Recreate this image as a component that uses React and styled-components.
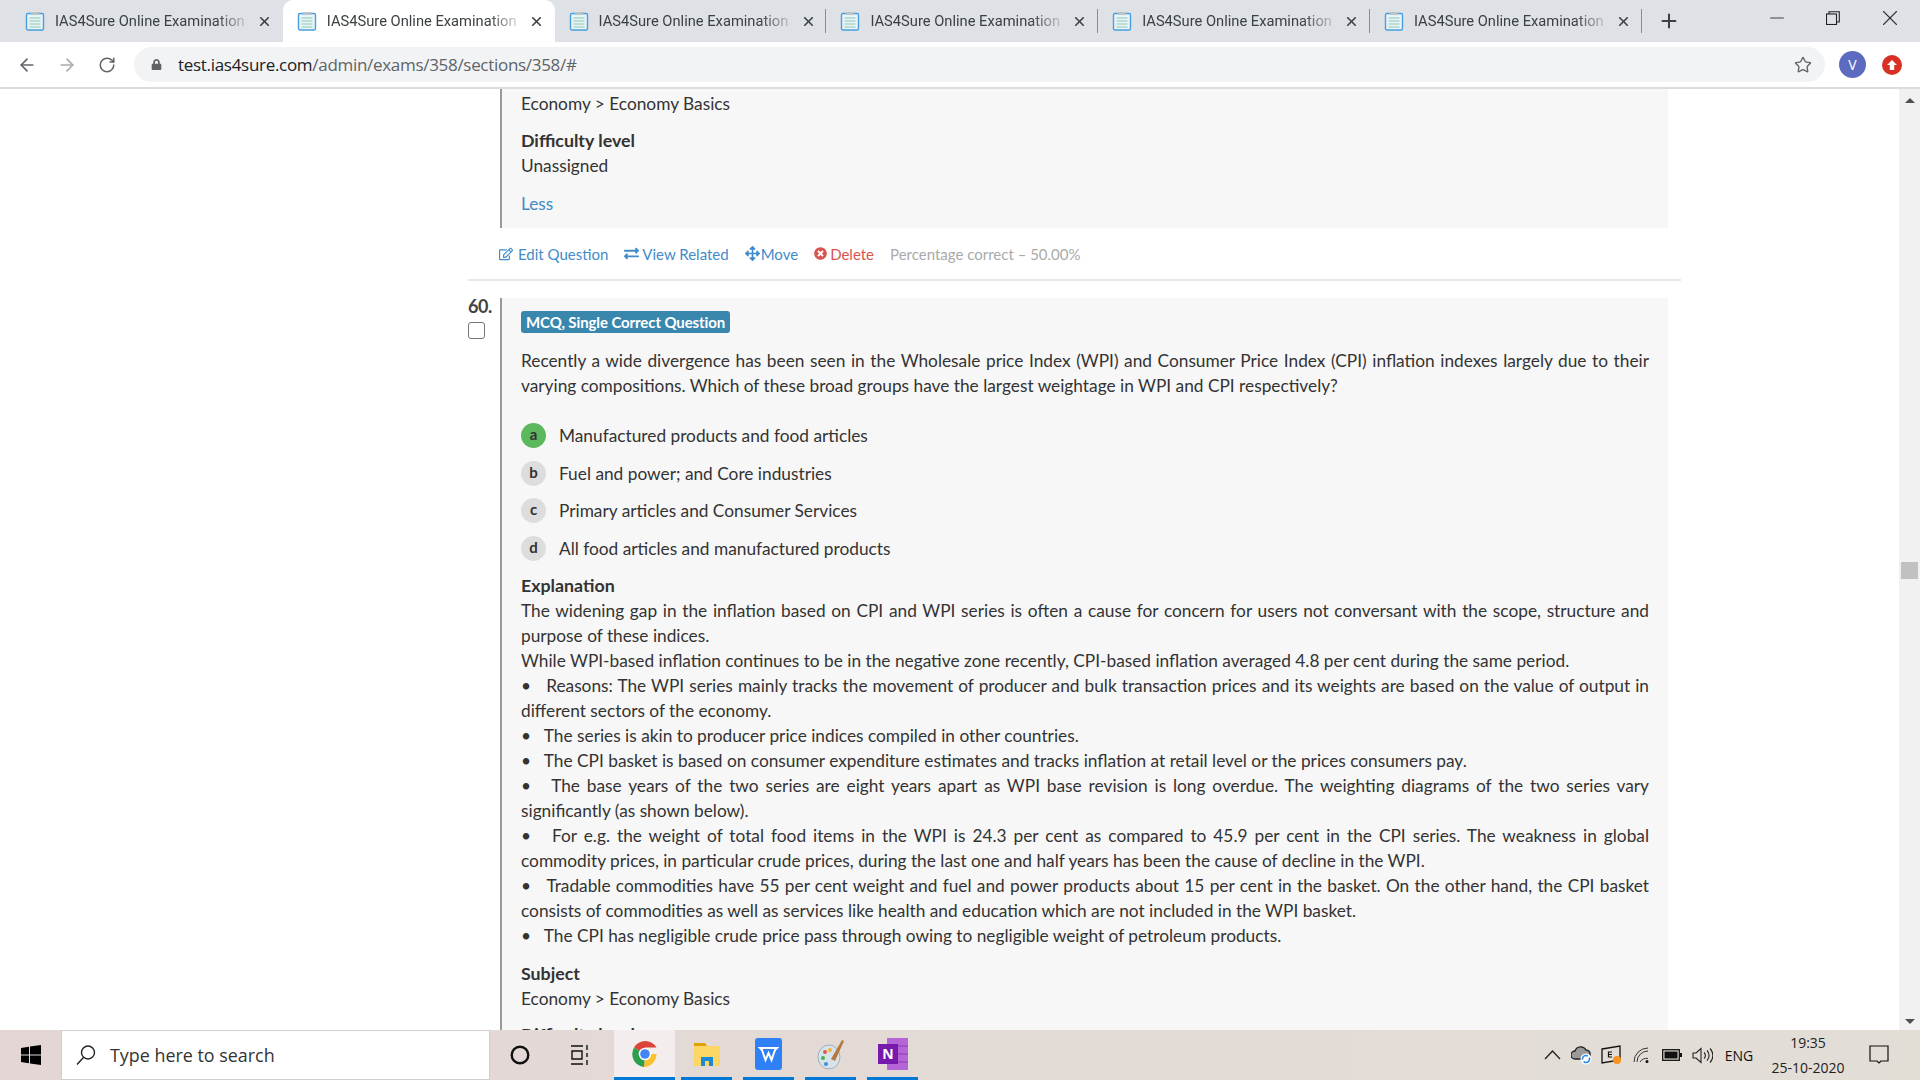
import React from "react";
import styled, { createGlobalStyle } from "styled-components";
import { ArrowLeft, ArrowRight, RotateCw, Star, Plus, X, Minus } from "lucide-react";
import { FaRegEdit, FaExchangeAlt, FaArrowsAlt, FaTimesCircle, FaLock } from "react-icons/fa";

const Global = createGlobalStyle`
	html, body { margin: 0; padding: 0; height: 100%; overflow: hidden; }
	body { font-family: "Lato", "Liberation Sans", sans-serif; color: #333; background: #fff; }
	* { box-sizing: border-box; }
`;

const Screen = styled.div`
	width: 1920px;
	height: 1080px;
	display: flex;
	flex-direction: column;
	overflow: hidden;
`;

/* browser chrome */
const TabBar = styled.div`
	height: 42px;
	flex: none;
	background: #dee1e6;
	display: flex;
	padding-left: 11px;
`;

const Tab = styled.div`
	width: 271.8px;
	height: 42px;
	flex: none;
	display: flex;
	align-items: center;
	padding: 0 10px 0 14px;
	position: relative;
	background: ${(p) => (p.$active ? "#fff" : "transparent")};
	border-radius: ${(p) => (p.$active ? "10px 10px 0 0" : "0")};

	& > svg {
		flex: none;
	}

	&::after {
		content: "";
		display: ${(p) => (p.$sep ? "block" : "none")};
		position: absolute;
		right: 0;
		top: 9px;
		height: 24px;
		width: 1px;
		background: #8b8d90;
	}
`;

const TabTitle = styled.span`
	margin-left: 10px;
	width: 192px;
	flex: none;
	font: 14.7px "Roboto", sans-serif;
	color: #3c4043;
	white-space: nowrap;
	-webkit-mask-image: linear-gradient(to right, #000 84%, rgba(0, 0, 0, 0.25) 98%);
	mask-image: linear-gradient(to right, #000 84%, rgba(0, 0, 0, 0.25) 98%);
`;

const TabClose = styled.span`
	margin-left: 10px;
	display: flex;
	color: #3c4043;
`;

const NewTab = styled.div`
	width: 46px;
	display: flex;
	align-items: center;
	justify-content: center;
	color: #3c4043;
	margin-left: 4px;
`;

const WindowButtons = styled.div`
	margin-left: auto;
	display: flex;
	height: 36px;
	align-items: center;
	color: #333;
	padding-right: 1px;
`;

const WindowButton = styled.div`
	width: ${(p) => p.$w || 56}px;
	display: flex;
	justify-content: center;
`;

const Toolbar = styled.div`
	height: 47px;
	flex: none;
	background: #fff;
	border-bottom: 2px solid #dadce0;
	display: flex;
	align-items: center;
	padding: 0 16px 0 7px;
`;

const NavButton = styled.div`
	width: 40px;
	display: flex;
	justify-content: center;
	color: ${(p) => (p.$dim ? "#a8abaf" : "#5f6368")};
`;

const Omnibox = styled.div`
	margin-left: 7px;
	width: 1691px;
	height: 35px;
	border-radius: 18px;
	background: #f1f3f4;
	display: flex;
	align-items: center;
	padding: 0 13px 0 17px;
	font: 17px "Open Sans", sans-serif;
	letter-spacing: -0.3px;
	color: #5f6368;
`;

const LockIcon = styled.span`
	display: flex;
	color: #5f6368;
	margin-right: 16px;
`;

const Host = styled.span`
	color: #202124;
`;

const StarIcon = styled.span`
	margin-left: auto;
	display: flex;
	color: #5f6368;
`;

const Avatar = styled.div`
	margin-left: 14px;
	width: 27px;
	height: 27px;
	border-radius: 50%;
	background: #5c6bc0;
	color: #fff;
	font: 14px "Open Sans", sans-serif;
	display: flex;
	align-items: center;
	justify-content: center;
`;

const UpdateBadge = styled.div`
	margin-left: 16px;
	width: 20px;
	height: 20px;
	border-radius: 50%;
	background: #d93025;
	display: flex;
	align-items: center;
	justify-content: center;
`;

/* page */
const Viewport = styled.div`
	flex: 1;
	min-height: 0;
	display: flex;
	overflow: hidden;
`;

const Main = styled.main`
	flex: 1;
	min-width: 0;
	padding-left: 468px;
	overflow: hidden;
`;

const Column = styled.div`
	width: 1213px;
`;

const Question = styled.div`
	display: flex;
	align-items: stretch;
`;

const Gutter = styled.div`
	width: 32px;
	flex: none;
`;

const Number = styled.div`
	font-size: 18px;
	font-weight: 700;
	line-height: 18px;
	letter-spacing: -0.5px;
	margin-top: -1px;
	color: #444;
`;

const Check = styled.input.attrs({ type: "checkbox" })`
	appearance: none;
	display: block;
	width: 17px;
	height: 17px;
	margin: 7px 0 0;
	border: 1px solid #767676;
	border-radius: 3px;
	background: #fff;
`;

const Card = styled.div`
	width: 1168px;
	flex: none;
	background: #f7f7f7;
	border-left: 2px solid #999;
	padding: ${(p) => (p.$top ? "2px" : "3px")} 19px 0;
	font-size: 17.3px;
	line-height: 25px;
	min-height: ${(p) => (p.$top ? "auto" : "800px")};
`;

const Line = styled.div`
	margin-top: ${(p) => p.$gap || 0}px;
`;

const Label = styled.div`
	font-weight: 700;
	font-size: 17.8px;
	margin-top: ${(p) => p.$gap || 0}px;
`;

const MoreLink = styled.a`
	display: block;
	color: #428bca;
	margin-top: 13px;
	height: 37px;
`;

const Actions = styled.div`
	display: flex;
	align-items: center;
	height: 53px;
	padding-left: 31px;
	font-size: 15px;
	border-bottom: 2px solid #e8e8e8;
`;

const Action = styled.a`
	display: flex;
	align-items: center;
	gap: ${(p) => p.$gap || 3}px;
	margin-right: ${(p) => p.$mr || 16}px;
	color: ${(p) => (p.$danger ? "#d9534f" : "#428bca")};

	& svg {
		flex: none;
	}
`;

const Score = styled.span`
	color: #aaa;
`;

const Spacer = styled.div`
	height: 17px;
`;

const Badge = styled.span`
	display: inline-block;
	height: 22px;
	padding: 0 5px;
	background: #3a87ad;
	border-radius: 3px;
	color: #fff;
	font-size: 15px;
	font-weight: 700;
	line-height: 22px;
	margin-top: 10px;
	vertical-align: top;
	letter-spacing: -0.1px;
`;

const BadgeRow = styled.div`
	height: 32px;
`;

const Prose = styled.div`
	text-align: justify;
	margin-top: ${(p) => p.$gap || 0}px;
`;

const Options = styled.div`
	margin-top: 25px;
	display: flex;
	flex-direction: column;
	gap: 12.6px;
`;

const Option = styled.div`
	display: flex;
	align-items: center;
	height: 25px;
	gap: 13px;
`;

const Letter = styled.span`
	width: 25px;
	height: 25px;
	border-radius: 50%;
	background: ${(p) => (p.$correct ? "#5cb85c" : "#ddd")};
	font-size: 15px;
	font-weight: 700;
	display: flex;
	align-items: center;
	justify-content: center;
	padding-bottom: 2px;
`;

const Scrollbar = styled.div`
	width: 21px;
	flex: none;
	background: #f1f1f1;
	display: flex;
	flex-direction: column;
	align-items: center;
	padding: 9px 0 6px;
`;

const Arrow = styled.span`
	width: 0;
	height: 0;
	border-left: 5px solid transparent;
	border-right: 5px solid transparent;
	${(p) => (p.$down ? "border-top: 5px solid #505050;" : "border-bottom: 5px solid #505050;")}
`;

const Thumb = styled.div`
	width: 17px;
	height: 17px;
	background: #c1c1c1;
	margin-top: 459px;
	margin-bottom: auto;
`;

/* taskbar */
const Taskbar = styled.div`
	height: 50px;
	flex: none;
	background: linear-gradient(to right, #e3d6d5, #e3dbd6 55%, #e2ded6);
	display: flex;
	align-items: stretch;
	color: #111;
`;

const StartButton = styled.div`
	width: 61px;
	display: flex;
	align-items: center;
	justify-content: center;
`;

const SearchBox = styled.div`
	width: 429px;
	background: #fff;
	border: 1px solid #cfcfcf;
	display: flex;
	align-items: center;
	padding-left: 13px;
	gap: 13px;
	font: 17.9px "Open Sans", sans-serif;
	color: #333;
`;

const Plain = styled.div`
	width: ${(p) => p.$w}px;
	display: flex;
	align-items: center;
	justify-content: center;
`;

const Pinned = styled.div`
	width: ${(p) => p.$w}px;
	margin-left: ${(p) => p.$ml || 0}px;
	display: flex;
	align-items: center;
	justify-content: center;
	background: ${(p) => (p.$active ? "#f3eeed" : "transparent")};
	border-bottom: 3px solid #0078d7;
`;

const Tray = styled.div`
	margin-left: auto;
	display: flex;
	align-items: center;
	padding-right: 17px;
`;

const TrayIcon = styled.div`
	width: ${(p) => p.$w || 30}px;
	display: flex;
	justify-content: center;
`;

const Lang = styled.div`
	width: 44px;
	text-align: center;
	font: 14px "Open Sans", sans-serif;
`;

const Clock = styled.div`
	width: 94px;
	text-align: center;
	font: 14px/25px "Open Sans", sans-serif;
	color: #222;
`;

const TabIcon = () => (
	<svg width="20" height="20" viewBox="0 0 20 20">
		<rect x="1.5" y="2.5" width="17" height="16.5" rx="1.5" fill="#e9f3f8" stroke="#4a9fdc" strokeWidth="1.4" />
		<rect x="6" y="1" width="8" height="3" fill="#b7c4cc" />
		<path d="M4.5 7h11M4.5 10h11M4.5 13h11M4.5 16h11" stroke="#a9d8c8" strokeWidth="1.3" />
	</svg>
);

const WindowsLogo = () => (
	<svg width="20" height="20" viewBox="0 0 20 20" fill="#000">
		<path d="M0 3l8-1.2v7.7H0zM9 1.6L20 0v9.5H9zM0 10.500h8v7.700L0 17zM9 10.500h11V20L9 18.400z" />
	</svg>
);

const SearchGlass = () => (
	<svg width="22" height="22" viewBox="0 0 22 22" fill="none" stroke="#222" strokeWidth="1.4">
		<circle cx="13" cy="8.500" r="6.500" />
		<path d="M8.500 13.500L2 20.500" />
	</svg>
);

const TaskView = () => (
	<svg width="20" height="20" viewBox="0 0 20 20" fill="none" stroke="#111" strokeWidth="1.4">
		<path d="M0 1h12M0 19h12M1 6h10v8H1zM16 0v5M16 8v4M16 15v5" />
	</svg>
);

const ChromeIcon = () => (
	<svg width="28" height="28" viewBox="0 0 28 28">
		<path d="M14 14L3 7.500A13 13 0 0 1 25.500 7.500H14z" fill="#db4437" />
		<path d="M14 14H25.500A13 13 0 0 1 13 27z" fill="#fbc02d" />
		<path d="M14 14L13 27A13 13 0 0 1 3 7.500z" fill="#2e9e4f" />
		<circle cx="14" cy="14" r="6.300" fill="#fff" />
		<circle cx="14" cy="14" r="4.800" fill="#4285f4" />
	</svg>
);

const FolderIcon = () => (
	<svg width="28" height="28" viewBox="0 0 28 28">
		<path d="M1 3h11l2 3H1z" fill="#e0a100" />
		<rect x="1" y="6" width="26" height="20" fill="#fcd766" />
		<path d="M8 26v-9h12v9h-4v-5h-4v5z" fill="#1e88d8" />
	</svg>
);

const WpsIcon = () => (
	<svg width="27" height="32" viewBox="0 0 27 32">
		<rect width="27" height="32" rx="3" fill="#2f80f5" />
		<path d="M5 10h17l-2 2-3.500 10-3-7-3 7L7 12z" fill="none" stroke="#fff" strokeWidth="2" />
	</svg>
);

const PaintIcon = () => (
	<svg width="30" height="32" viewBox="0 0 30 32">
		<ellipse cx="13" cy="19" rx="11" ry="12" fill="#d7e3ea" stroke="#9fb0ba" />
		<circle cx="9" cy="14" r="2" fill="#e2574c" />
		<circle cx="14" cy="12" r="2" fill="#f2b632" />
		<circle cx="7" cy="20" r="2" fill="#4caf50" />
		<circle cx="10" cy="26" r="2" fill="#3f8fdc" />
		<path d="M15 21L26 2l2 1-9 20z" fill="#b5793c" />
	</svg>
);

const OneNoteIcon = () => (
	<svg width="30" height="32" viewBox="0 0 30 32">
		<rect x="9" y="0" width="21" height="32" fill="#b565d8" />
		<path d="M9 8h21M9 16h21M9 24h21" stroke="#8a3fb0" strokeWidth="1" />
		<rect x="0" y="6" width="20" height="20" fill="#7719aa" />
		<text x="10" y="21" textAnchor="middle" fill="#fff" fontSize="14" fontWeight="700" fontFamily="Open Sans">N</text>
	</svg>
);

const CloudIcon = () => (
	<svg width="22" height="20" viewBox="0 0 22 20">
		<path d="M4 14a4 4 0 0 1 0-8 6 6 0 0 1 11-1 4 4 0 0 1 4 5v4z" fill="#9a9a9a" stroke="#222" strokeWidth="1.300" />
		<circle cx="15" cy="14" r="5.500" fill="#fff" />
		<circle cx="15" cy="14" r="3.500" fill="none" stroke="#1e88e5" strokeWidth="1.600" strokeDasharray="8 2" />
	</svg>
);

const StoreIcon = () => (
	<svg width="22" height="20" viewBox="0 0 22 20">
		<path d="M1 4l18-3v14L1 18z" fill="none" stroke="#111" strokeWidth="1.300" />
		<path d="M11 7H7.500v5H11M7.500 9.500H11" fill="none" stroke="#111" strokeWidth="1.200" />
		<circle cx="16" cy="15" r="4" fill="#f7931e" />
	</svg>
);

const WifiIcon = () => (
	<svg width="18" height="18" viewBox="0 0 18 18" fill="none" stroke="#333" strokeWidth="1">
		<path d="M1 16A14 14 0 0 1 15 2M4 16A11 11 0 0 1 15 5M7 16a8 8 0 0 1 8-3.500" />
		<circle cx="14" cy="15.500" r="1.500" fill="#111" stroke="none" />
	</svg>
);

const BatteryIcon = () => (
	<svg width="20" height="12" viewBox="0 0 20 12">
		<rect x="0.700" y="0.700" width="16.600" height="10.600" fill="none" stroke="#111" strokeWidth="1.300" />
		<rect x="2.500" y="2.500" width="13" height="7" fill="#111" />
		<rect x="18" y="4" width="2" height="4" fill="#111" />
	</svg>
);

const SpeakerIcon = () => (
	<svg width="21" height="17" viewBox="0 0 21 17" fill="none" stroke="#222" strokeWidth="1.100">
		<path d="M1 6h3l5-4.500v14L4 11H1z" />
		<path d="M12 5.500a4 4 0 0 1 0 6M15 3.500a7 7 0 0 1 0 10M18 1.500a10 10 0 0 1 0 14" />
	</svg>
);

const TrayChevron = () => (
	<svg width="17" height="10" viewBox="0 0 17 10" fill="none" stroke="#222" strokeWidth="1.300">
		<path d="M1 9l7.500-8L16 9" />
	</svg>
);

const NotifyIcon = () => (
	<svg width="20" height="20" viewBox="0 0 20 20" fill="none" stroke="#111" strokeWidth="1.200">
		<path d="M1 1h18v15h-7l-2 2-2-2H1z" />
	</svg>
);

const bullet = "•\u00a0\u00a0\u00a0";

const explanation = [
	"The widening gap in the inflation based on CPI and WPI series is often a cause for concern for users not conversant with the scope, structure and purpose of these indices.",
	"While WPI-based inflation continues to be in the negative zone recently, CPI-based inflation averaged 4.8 per cent during the same period.",
	bullet + "Reasons: The WPI series mainly tracks the movement of producer and bulk transaction prices and its weights are based on the value of output in different sectors of the economy.",
	bullet + "The series is akin to producer price indices compiled in other countries.",
	bullet + "The CPI basket is based on consumer expenditure estimates and tracks inflation at retail level or the prices consumers pay.",
	bullet + "The base years of the two series are eight years apart as WPI base revision is long overdue. The weighting diagrams of the two series vary significantly (as shown below).",
	bullet + "For e.g. the weight of total food items in the WPI is 24.3 per cent as compared to 45.9 per cent in the CPI series. The weakness in global commodity prices, in particular crude prices, during the last one and half years has been the cause of decline in the WPI.",
	bullet + "Tradable commodities have 55 per cent weight and fuel and power products about 15 per cent in the basket. On the other hand, the CPI basket consists of commodities as well as services like health and education which are not included in the WPI basket.",
	bullet + "The CPI has negligible crude price pass through owing to negligible weight of petroleum products.",
];

const options = [
	{ key: "a", text: "Manufactured products and food articles", correct: true },
	{ key: "b", text: "Fuel and power; and Core industries" },
	{ key: "c", text: "Primary articles and Consumer Services" },
	{ key: "d", text: "All food articles and manufactured products" },
];

const App = () => {
	return (
		<Screen>
			<Global />
			<TabBar>
				{[0, 1, 2, 3, 4, 5].map((i) => (
					<Tab key={i} $active={i === 1} $sep={i > 1}>
						<TabIcon />
						<TabTitle>IAS4Sure Online Examination</TabTitle>
						<TabClose><X size={15} strokeWidth={2.6} /></TabClose>
					</Tab>
				))}
				<NewTab><Plus size={22} strokeWidth={2.2} /></NewTab>
				<WindowButtons>
					<WindowButton><Minus size={22} strokeWidth={1} /></WindowButton>
					<WindowButton>
						<svg width="14" height="14" viewBox="0 0 14 14" fill="none" stroke="#222" strokeWidth="1.100">
							<rect x="0.500" y="3" width="10" height="10.500" />
							<path d="M3 3V0.700h10.300V11H10.500" />
						</svg>
					</WindowButton>
					<WindowButton $w={58}><X size={26} strokeWidth={1} /></WindowButton>
				</WindowButtons>
			</TabBar>
			<Toolbar>
				<NavButton><ArrowLeft size={20} strokeWidth={2} /></NavButton>
				<NavButton $dim><ArrowRight size={20} strokeWidth={2} /></NavButton>
				<NavButton><RotateCw size={18} strokeWidth={2} /></NavButton>
				<Omnibox>
					<LockIcon><FaLock size={11} /></LockIcon>
					<Host>test.ias4sure.com</Host>/admin/exams/358/sections/358/#
					<StarIcon><Star size={18} strokeWidth={1.8} /></StarIcon>
				</Omnibox>
				<Avatar>V</Avatar>
				<UpdateBadge>
					<svg width="12" height="12" viewBox="0 0 12 12" fill="#fff"><path d="M6 1l5 5H8.200v5H3.800V6H1z" /></svg>
				</UpdateBadge>
			</Toolbar>
			<Viewport>
				<Main>
					<Column>
						<Question>
							<Gutter />
							<Card $top>
								<Line>Economy &gt; Economy Basics</Line>
								<Label $gap={12}>Difficulty level</Label>
								<Line>Unassigned</Line>
								<MoreLink>Less</MoreLink>
							</Card>
						</Question>
						<Actions>
							<Action $gap={5}><FaRegEdit size={14} />Edit Question</Action>
							<Action><FaExchangeAlt size={15} />View Related</Action>
							<Action $gap={1}><FaArrowsAlt size={15} />Move</Action>
							<Action $danger><FaTimesCircle size={13} />Delete</Action>
							<Score>Percentage correct – 50.00%</Score>
						</Actions>
						<Spacer />
						<Question>
							<Gutter>
								<Number>60.</Number>
								<Check readOnly />
							</Gutter>
							<Card>
								<BadgeRow><Badge>MCQ, Single Correct Question</Badge></BadgeRow>
								<Prose $gap={15}>
									Recently a wide divergence has been seen in the Wholesale price Index (WPI) and Consumer Price Index (CPI) inflation indexes largely due to their varying compositions. Which of these broad groups have the largest weightage in WPI and CPI respectively?
								</Prose>
								<Options>
									{options.map((o) => (
										<Option key={o.key}>
											<Letter $correct={o.correct}>{o.key}</Letter>
											{o.text}
										</Option>
									))}
								</Options>
								<Label $gap={12}>Explanation</Label>
								{explanation.map((t, i) => (
									<Prose key={i}>{t}</Prose>
								))}
								<Label $gap={13}>Subject</Label>
								<Line>Economy &gt; Economy Basics</Line>
								<Label $gap={11}>Difficulty level</Label>
							</Card>
						</Question>
					</Column>
				</Main>
				<Scrollbar>
					<Arrow />
					<Thumb />
					<Arrow $down />
				</Scrollbar>
			</Viewport>
			<Taskbar>
				<StartButton><WindowsLogo /></StartButton>
				<SearchBox>
					<SearchGlass />
					Type here to search
				</SearchBox>
				<Plain $w={59}>
					<svg width="20" height="20" viewBox="0 0 20 20" fill="none" stroke="#111" strokeWidth="2.400"><circle cx="10" cy="10" r="8.300" /></svg>
				</Plain>
				<Plain $w={63}><TaskView /></Plain>
				<Pinned $w={61} $ml={2} $active><ChromeIcon /></Pinned>
				<Pinned $w={51} $ml={6}><FolderIcon /></Pinned>
				<Pinned $w={51} $ml={11}><WpsIcon /></Pinned>
				<Pinned $w={51} $ml={11}><PaintIcon /></Pinned>
				<Pinned $w={51} $ml={11}><OneNoteIcon /></Pinned>
				<Tray>
					<TrayIcon><TrayChevron /></TrayIcon>
					<TrayIcon><CloudIcon /></TrayIcon>
					<TrayIcon><StoreIcon /></TrayIcon>
					<TrayIcon><WifiIcon /></TrayIcon>
					<TrayIcon><BatteryIcon /></TrayIcon>
					<TrayIcon><SpeakerIcon /></TrayIcon>
					<Lang>ENG</Lang>
					<Clock>19:35<br />25-10-2020</Clock>
					<TrayIcon $w={48}><NotifyIcon /></TrayIcon>
				</Tray>
			</Taskbar>
		</Screen>
	);
};

export default App;
